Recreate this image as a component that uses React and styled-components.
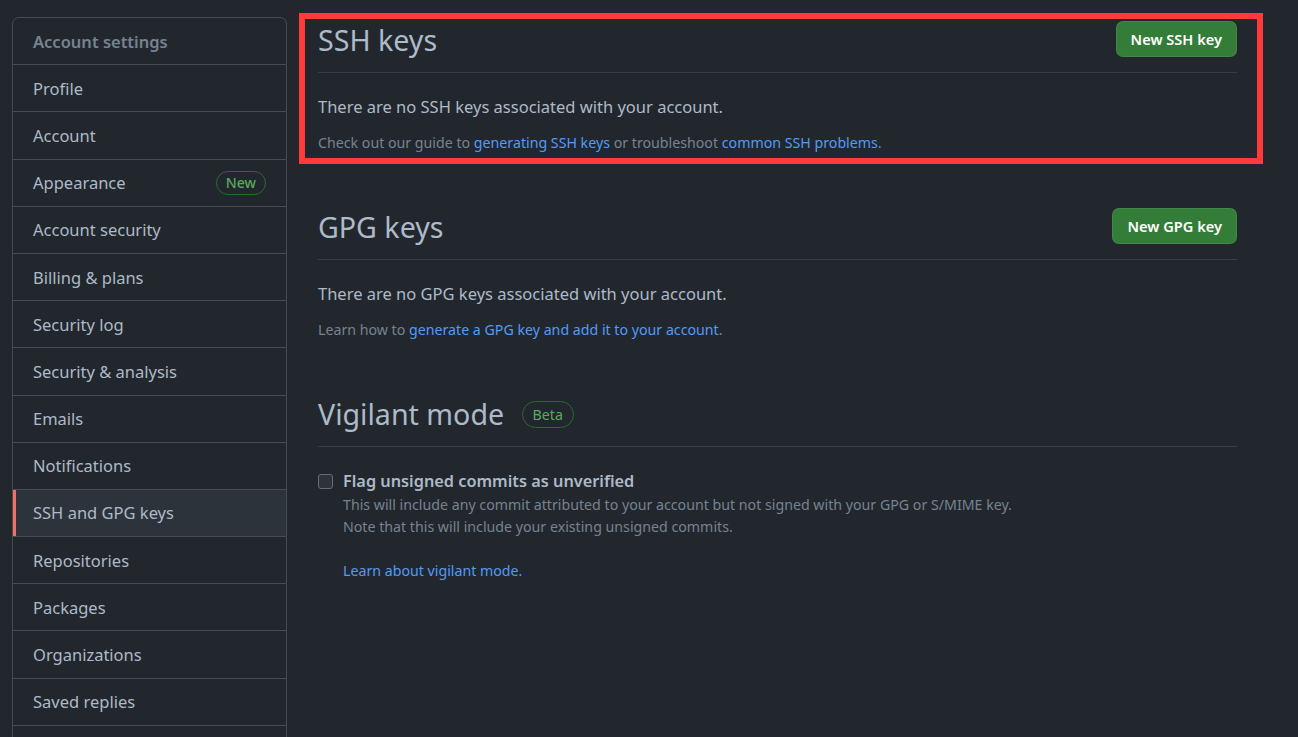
import React from 'react'
import styled, { createGlobalStyle } from 'styled-components'

const GlobalStyle = createGlobalStyle`
  html, body {
    margin: 0;
    padding: 0;
    background: #22272e;
  }
  body {
    font-family: 'Noto Sans', 'Open Sans', sans-serif;
    color: #adbac7;
    font-size: 16.5px;
  }
  a {
    color: #539bf5;
    text-decoration: none;
  }
`

const menuItems = [
  'Profile',
  'Account',
  'Appearance',
  'Account security',
  'Billing & plans',
  'Security log',
  'Security & analysis',
  'Emails',
  'Notifications',
  'SSH and GPG keys',
  'Repositories',
  'Packages',
  'Organizations',
  'Saved replies'
]

const App = () => {
  return (
    <Page>
      <GlobalStyle />
      <Sidebar>
        <MenuHeading>Account settings</MenuHeading>
        {menuItems.map((item) => (
          <MenuItem key={item} selected={item == 'SSH and GPG keys'}>
            <span>{item}</span>
            {item == 'Appearance' && <Label>New</Label>}
          </MenuItem>
        ))}
      </Sidebar>
      <Main>
        <Section highlighted>
          <Subhead>
            <SubheadTitle>SSH keys</SubheadTitle>
            <GreenButton>New SSH key</GreenButton>
          </Subhead>
          <BlankText>There are no SSH keys associated with your account.</BlankText>
          <Note>
            Check out our guide to <a href='#'>generating SSH keys</a> or troubleshoot{' '}
            <a href='#'>common SSH problems</a>.
          </Note>
        </Section>

        <Section>
          <Subhead>
            <SubheadTitle>GPG keys</SubheadTitle>
            <GreenButton>New GPG key</GreenButton>
          </Subhead>
          <BlankText>There are no GPG keys associated with your account.</BlankText>
          <Note>
            Learn how to <a href='#'>generate a GPG key and add it to your account</a>.
          </Note>
        </Section>

        <Section>
          <Subhead>
            <SubheadTitle>
              Vigilant mode <Label big>Beta</Label>
            </SubheadTitle>
          </Subhead>
          <CheckRow>
            <Checkbox type='checkbox' />
            <CheckBody>
              <CheckLabel>Flag unsigned commits as unverified</CheckLabel>
              <CheckNote>
                This will include any commit attributed to your account but not signed with your GPG or S/MIME key.
                <br />
                Note that this will include your existing unsigned commits.
              </CheckNote>
              <CheckLink href='#'>Learn about vigilant mode.</CheckLink>
            </CheckBody>
          </CheckRow>
        </Section>
      </Main>
    </Page>
  )
}

const Page = styled.div`
  display: flex;
  align-items: flex-start;
  padding: 17px 0 0 12px;
  height: 737px;
  box-sizing: border-box;
  overflow: hidden;
`

const Sidebar = styled.nav`
  width: 275px;
  flex-shrink: 0;
  padding-bottom: 60px;
  border: 1px solid #444c56;
  border-radius: 7px;
  box-sizing: border-box;
  overflow: hidden;
`

const MenuHeading = styled.div`
  height: 46.2px;
  display: flex;
  align-items: center;
  padding-left: 20px;
  font-weight: 600;
  color: #768390;
  border-bottom: 1px solid #444c56;
`

const MenuItem = styled.div`
  height: 46.2px;
  display: flex;
  align-items: center;
  justify-content: space-between;
  padding: 0 20px;
  color: #adbac7;
  border-bottom: 1px solid #444c56;
  background: ${(p) => (p.selected ? '#2d333b' : 'transparent')};
  box-shadow: ${(p) => (p.selected ? 'inset 3px 0 0 #f47067' : 'none')};
`

const Label = styled.span`
  display: inline-flex;
  align-items: center;
  height: ${(p) => (p.big ? '27px' : '24px')};
  padding: 0 ${(p) => (p.big ? '10px' : '9px')};
  border: 1px solid #2b6a30;
  border-radius: 20px;
  color: #57ab5a;
  font-size: 14.2px;
  font-weight: ${(p) => (p.big ? 400 : 500)};
  vertical-align: middle;
  margin-left: ${(p) => (p.big ? '10px' : '0')};
  position: relative;
  top: ${(p) => (p.big ? '-3px' : '0')};
  box-sizing: border-box;
`

const Main = styled.main`
  width: 919px;
  margin-left: 31px;
  display: flex;
  flex-direction: column;
  gap: 50px;
`

const Section = styled.section`
  position: relative;
  &::before {
    content: '';
    display: ${(p) => (p.highlighted ? 'block' : 'none')};
    position: absolute;
    left: -19px;
    right: -26px;
    top: -4px;
    bottom: -10px;
    border: 6.5px solid #ff3a3a;
    pointer-events: none;
  }
`

const Subhead = styled.div`
  display: flex;
  align-items: center;
  justify-content: space-between;
  padding: 1px 0 11px;
  border-bottom: 1px solid #373e47;
  margin-bottom: 21px;
`

const SubheadTitle = styled.h2`
  margin: 0;
  font-size: 28.6px;
  font-weight: 400;
  line-height: 43px;
  color: #adbac7;
`

const GreenButton = styled.button`
  height: 36px;
  margin-top: -2px;
  padding: 0 14px;
  background: #347d39;
  color: #ffffff;
  border: 1px solid rgba(205, 217, 229, 0.1);
  border-radius: 7px;
  font-family: inherit;
  font-size: 14.6px;
  font-weight: 600;
  cursor: pointer;
`

const BlankText = styled.p`
  margin: 0 0 12px;
  line-height: 26px;
`

const Note = styled.p`
  margin: 0;
  font-size: 14.2px;
  line-height: 22px;
  color: #768390;
`

const CheckRow = styled.div`
  display: flex;
  align-items: flex-start;
  gap: 10px;
`

const Checkbox = styled.input`
  appearance: none;
  width: 15px;
  height: 15px;
  margin: 6px 0 0;
  border: 1px solid #636e7b;
  border-radius: 3px;
  background: #2d333b;
  flex-shrink: 0;
`

const CheckBody = styled.div`
  display: flex;
  flex-direction: column;
`

const CheckLabel = styled.label`
  font-size: 16.3px;
  font-weight: 600;
  line-height: 26px;
`

const CheckNote = styled.p`
  margin: 0 0 22px;
  font-size: 14.2px;
  line-height: 22px;
  color: #768390;
`

const CheckLink = styled.a`
  font-size: 14.2px;
  line-height: 22px;
`

export default App
